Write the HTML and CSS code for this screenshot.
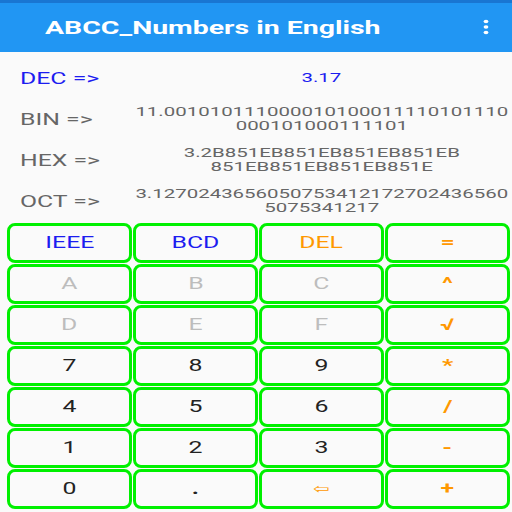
FILE: index.html
```html
<!DOCTYPE html>
<html>
<head>
    <meta charset="UTF-8">
    <meta name="viewport" content="width=device-width, initial-scale=1.0">
    <title>ABCC_Numbers in English</title>
    <link rel="stylesheet" href="styles.css">
</head>
<body>
    <div class="status-bar"></div>
    <div class="app-bar">
        <span class="title sx">ABCC_Numbers in English</span>
        <svg class="menu" width="10" height="20" viewBox="0 0 10 20">
            <ellipse cx="5" cy="3.5" rx="2.4" ry="1.8" fill="#fff"/>
            <ellipse cx="5" cy="9" rx="2.4" ry="1.8" fill="#fff"/>
            <ellipse cx="5" cy="14.5" rx="2.4" ry="1.8" fill="#fff"/>
        </svg>
    </div>

    <div class="results">
        <div class="row active">
            <div class="label"><span class="sx left">DEC =&gt;</span></div>
            <div class="value"><span class="sx">3.17</span></div>
        </div>
        <div class="row">
            <div class="label"><span class="sx left">BIN =&gt;</span></div>
            <div class="value"><span class="sx">11.001010111000010100011110101110<br>000101000111101</span></div>
        </div>
        <div class="row">
            <div class="label"><span class="sx left">HEX =&gt;</span></div>
            <div class="value"><span class="sx">3.2B851EB851EB851EB851EB<br>851EB851EB851EB851E</span></div>
        </div>
        <div class="row">
            <div class="label"><span class="sx left">OCT =&gt;</span></div>
            <div class="value"><span class="sx">3.1270243656050753412172702436560<br>5075341217</span></div>
        </div>
    </div>

    <div class="keypad">
        <button class="key mode"><span class="sx">IEEE</span></button>
        <button class="key mode"><span class="sx">BCD</span></button>
        <button class="key op thin"><span class="sx">DEL</span></button>
        <button class="key op"><span class="sx">=</span></button>

        <button class="key hex"><span class="sx">A</span></button>
        <button class="key hex"><span class="sx">B</span></button>
        <button class="key hex"><span class="sx">C</span></button>
        <button class="key op"><span class="sx">^</span></button>

        <button class="key hex"><span class="sx">D</span></button>
        <button class="key hex"><span class="sx">E</span></button>
        <button class="key hex"><span class="sx">F</span></button>
        <button class="key op"><span class="sx">√</span></button>

        <button class="key"><span class="sx">7</span></button>
        <button class="key"><span class="sx">8</span></button>
        <button class="key"><span class="sx">9</span></button>
        <button class="key op"><span class="sx">*</span></button>

        <button class="key"><span class="sx">4</span></button>
        <button class="key"><span class="sx">5</span></button>
        <button class="key"><span class="sx">6</span></button>
        <button class="key op"><span class="sx">/</span></button>

        <button class="key"><span class="sx">1</span></button>
        <button class="key"><span class="sx">2</span></button>
        <button class="key"><span class="sx">3</span></button>
        <button class="key op"><span class="sx">-</span></button>

        <button class="key"><span class="sx">0</span></button>
        <button class="key dot"><span class="sx">.</span></button>
        <button class="key op thin back"><span class="sx">⇦</span></button>
        <button class="key op"><span class="sx">+</span></button>
    </div>
</body>
</html>
```

FILE: styles.css
```css
* {
    box-sizing: border-box;
}

body {
    margin: 0;
    width: 512px;
    height: 512px;
    overflow: hidden;
    background: #fafafa;
    font-family: Roboto, "Liberation Sans", sans-serif;
}

/* the screenshot is stretched sideways, so glyphs are too */
.sx {
    display: inline-block;
    transform: scaleX(1.55);
    transform-origin: center;
}

.sx.left {
    transform-origin: left center;
}

.status-bar {
    height: 3px;
    background: #1976d2;
}

.app-bar {
    height: 49px;
    background: #2196f3;
    display: flex;
    align-items: center;
    padding: 0 21px 0 45px;
}

.title {
    color: #fff;
    font-size: 18px;
    font-weight: bold;
    transform: scaleX(1.58);
    transform-origin: left center;
}

.menu {
    margin-left: auto;
}

.results {
    padding-top: 5.5px;
}

.row {
    height: 41px;
    display: flex;
    align-items: center;
    color: #666;
}

.label {
    width: 131px;
    padding-left: 20px;
    font-size: 16px;
}

.value {
    flex: 1;
    text-align: center;
    font-size: 12.7px;
    line-height: 14.5px;
    white-space: nowrap;
}

.value .sx {
    transform: scaleX(1.61);
}

.row.active {
    color: #1c1cf0;
}

.keypad {
    display: grid;
    grid-template-columns: repeat(4, 1fr);
    grid-auto-rows: 40px;
    gap: 1px;
    padding: 1px 2px 0 7px;
}

.key {
    border: 3px solid #00f000;
    border-radius: 8px;
    background: #fafafa;
    font-family: Roboto, "Liberation Sans", sans-serif;
    font-size: 16px;
    color: #222;
    padding: 0;
}

.key.mode {
    color: #1c1cf0;
}

.key.hex {
    color: #bdbdbd;
}

.key.dot {
    font-weight: bold;
}

.key.op {
    color: #ff9800;
    font-weight: bold;
}

.key.thin {
    font-weight: normal;
}

.key.back {
    font-family: "DejaVu Sans", sans-serif;
    font-size: 13px;
}
```
